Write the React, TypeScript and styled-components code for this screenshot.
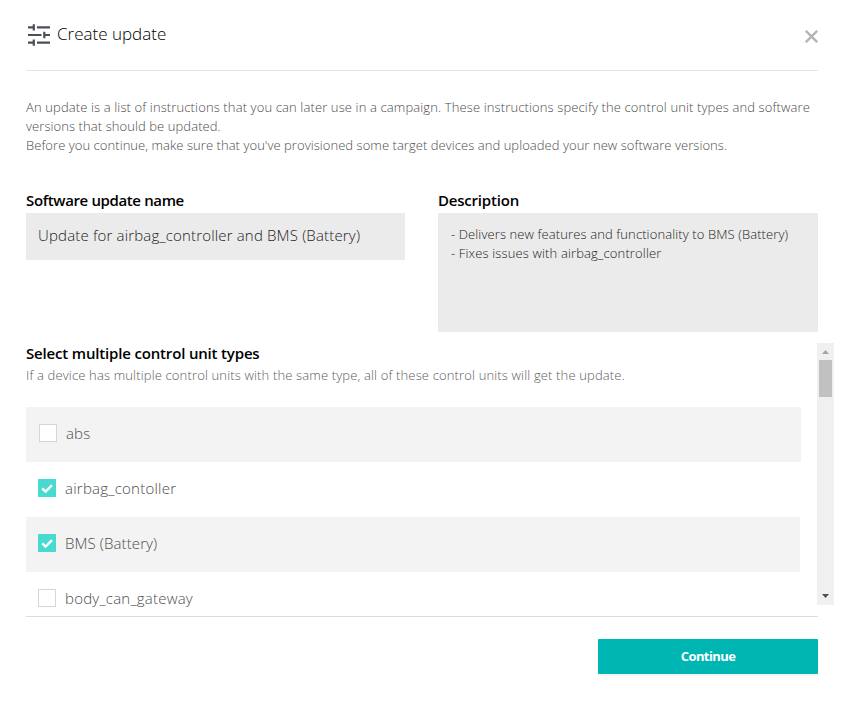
import React from "react";
import styled, { createGlobalStyle } from "styled-components";

const GlobalStyle = createGlobalStyle`
  * { box-sizing: border-box; }
  body {
    margin: 0;
    background: #fff;
    font-family: "Open Sans", "Noto Sans", sans-serif;
    overflow: hidden;
  }
`;

const Dialog = styled.main`
  display: flex;
  flex-direction: column;
  width: 844px;
  height: 701px;
  padding: 0 26px;
  background: #fff;
`;

const Header = styled.header`
  display: flex;
  align-items: flex-start;
  height: 71px;
  border-bottom: 1px solid #e3e4e4;
`;

const TitleIcon = styled.svg`
  width: 24px;
  height: 24px;
  margin: 23px 6px 0 1px;
`;

const Title = styled.h1`
  flex: 1;
  margin: 21px 0 0;
  font-size: 17px;
  line-height: 26px;
  font-weight: 300;
  color: #000;
`;

const CloseButton = styled.button`
  display: flex;
  width: 13px;
  height: 13px;
  margin-top: 30px;
  padding: 0;
  border: 0;
  background: none;
`;

const Tracked = styled.span<{ $tracking: number }>`
  letter-spacing: ${({ $tracking }) => $tracking}px;
  white-space: pre;
`;

const Intro = styled.p`
  display: flex;
  flex-direction: column;
  margin: 27px 0 0;
  font-size: 13px;
  line-height: 19px;
  font-weight: 300;
  color: #4c4c4c;
`;

const Fields = styled.section`
  display: grid;
  grid-template-columns: 379px 380px;
  column-gap: 33px;
  margin-top: 33px;
`;

const Field = styled.div`
  display: flex;
  flex-direction: column;
`;

const Label = styled.h2`
  height: 25px;
  margin: 0;
  font-size: 15px;
  line-height: 24px;
  font-weight: 600;
  color: #000;
`;

const NameInput = styled.div`
  height: 47px;
  padding: 0 12px;
  background: #ebebeb;
  font-size: 15px;
  line-height: 45px;
  font-weight: 300;
  color: #1c1c1c;
`;

const DescriptionInput = styled.div`
  display: flex;
  flex-direction: column;
  height: 119px;
  padding: 12px 13px;
  background: #ebebeb;
  font-size: 13px;
  line-height: 19px;
  font-weight: 300;
  color: #1c1c1c;
`;

const Selection = styled.section`
  display: flex;
  align-items: flex-start;
  justify-content: space-between;
  height: 274px;
  margin: 11px -16px 0 0;
  overflow: hidden;
`;

const Units = styled.div`
  width: 775px;
`;

const UnitsLabel = styled(Label)`
  height: 22px;
  line-height: 20px;
`;

const Hint = styled.p`
  margin: 0;
  font-size: 13px;
  line-height: 21px;
  font-weight: 300;
  color: #5d5d5d;
`;

const UnitList = styled.ul`
  margin: 21px 0 0;
  padding: 0;
  list-style: none;
`;

const UnitRow = styled.li<{ $shaded?: boolean; $first?: boolean }>`
  display: flex;
  align-items: center;
  gap: 9px;
  width: ${({ $first }) => ($first ? 775 : 774)}px;
  height: 55px;
  padding: 0 0 3px ${({ $first }) => ($first ? 13 : 12)}px;
  background: ${({ $shaded }) => ($shaded ? "#f3f3f3" : "#fff")};
  font-size: 15px;
  line-height: 24px;
  font-weight: 300;
  color: #4d4d4d;
`;

const Checkbox = styled.span<{ $checked: boolean }>`
  display: flex;
  width: 18px;
  height: 18px;
  border: ${({ $checked }) => ($checked ? "0" : "1px solid #d6d6d6")};
  background: ${({ $checked }) => ($checked ? "#48dad0" : "#fff")};
`;

const UnitName = styled(Tracked)`
  padding-bottom: 1px;
`;

const Scrollbar = styled.div`
  display: flex;
  flex-direction: column;
  align-items: center;
  width: 17px;
  height: 262px;
  background: #f0f0f0;
`;

const ScrollArrow = styled.svg`
  flex: none;
  width: 17px;
  height: 17px;
`;

const Thumb = styled.div`
  width: 13px;
  height: 37px;
  margin-bottom: auto;
  background: #c1c1c1;
`;

const Footer = styled.footer`
  display: flex;
  justify-content: flex-end;
  padding-top: 22px;
  border-top: 1px solid #dadbdb;
  margin-top: -1px;
`;

const ContinueButton = styled.button`
  width: 220px;
  height: 35px;
  padding: 0;
  border: 0;
  border-radius: 1px;
  background: #00b6b2;
  box-shadow: 0 2px 0 #f5f5f5;
  font: 700 13px/35px "Open Sans", sans-serif;
  color: #fff;
`;

const units = [
  { name: "abs", checked: false, tracking: 0.15 },
  { name: "airbag_contoller", checked: true, tracking: 0.24 },
  { name: "BMS (Battery)", checked: true, tracking: 0.1 },
  { name: "body_can_gateway", checked: false, tracking: 0.22 },
];

export default function App() {
  return (
    <>
      <GlobalStyle />
      <Dialog>
        <Header>
          <TitleIcon viewBox="0 0 24 24" fill="none" stroke="#4b4f58" strokeWidth="2.2">
            <path d="M1 4.4h6M10 4.4h13M1 12h13.5M17 12h6M1 19.6h6M10 19.6h13" />
            <path d="M6.8 1.2v6.4M17.3 8.8v6.4M6.8 16.4v6.4" />
          </TitleIcon>
          <Title><Tracked $tracking={0}>Create update</Tracked></Title>
          <CloseButton aria-label="Close">
            <svg width="13" height="13" viewBox="0 0 13 13" stroke="#b3b5b9" strokeWidth="2.4">
              <path d="M.8.8l11.4 11.4M12.2.8L.8 12.2" />
            </svg>
          </CloseButton>
        </Header>
        <Intro>
          <Tracked $tracking={0.124}>An update is a list of instructions that you can later use in a campaign. These instructions specify the control unit types and software</Tracked>
          <Tracked $tracking={0.08}>versions that should be updated.</Tracked>
          <Tracked $tracking={0.052}>Before you continue, make sure that you've provisioned some target devices and uploaded your new software versions.</Tracked>
        </Intro>
        <Fields>
          <Field>
            <Label><Tracked $tracking={-0.37}>Software update name</Tracked></Label>
            <NameInput><Tracked $tracking={0.165}>Update for airbag_controller and BMS (Battery)</Tracked></NameInput>
          </Field>
          <Field>
            <Label><Tracked $tracking={-0.2}>Description</Tracked></Label>
            <DescriptionInput>
              <Tracked $tracking={0.11}>- Delivers new features and functionality to BMS (Battery)</Tracked>
              <Tracked $tracking={0.14}>- Fixes issues with airbag_controller</Tracked>
            </DescriptionInput>
          </Field>
        </Fields>
        <Selection>
          <Units>
            <UnitsLabel><Tracked $tracking={-0.17}>Select multiple control unit types</Tracked></UnitsLabel>
            <Hint><Tracked $tracking={0.146}>If a device has multiple control units with the same type, all of these control units will get the update.</Tracked></Hint>
            <UnitList>
              {units.map((unit, i) => (
                <UnitRow key={unit.name} $shaded={i % 2 === 0} $first={i === 0}>
                  <Checkbox $checked={unit.checked}>
                    {unit.checked && (
                      <svg width="18" height="18" viewBox="0 0 18 18" fill="none" stroke="#fff" strokeWidth="2.4">
                        <path d="M4.2 9.4l3.4 3.2 6.4-6.4" />
                      </svg>
                    )}
                  </Checkbox>
                  <UnitName $tracking={unit.tracking}>{unit.name}</UnitName>
                </UnitRow>
              ))}
            </UnitList>
          </Units>
          <Scrollbar>
            <ScrollArrow viewBox="0 0 17 17"><path d="M5 11l3.5-4 3.5 4z" fill="#a3a3a3" /></ScrollArrow>
            <Thumb />
            <ScrollArrow viewBox="0 0 17 17"><path d="M5 6l3.5 4L12 6z" fill="#505050" /></ScrollArrow>
          </Scrollbar>
        </Selection>
        <Footer>
          <ContinueButton><Tracked $tracking={-0.6}>Continue</Tracked></ContinueButton>
        </Footer>
      </Dialog>
    </>
  );
}
